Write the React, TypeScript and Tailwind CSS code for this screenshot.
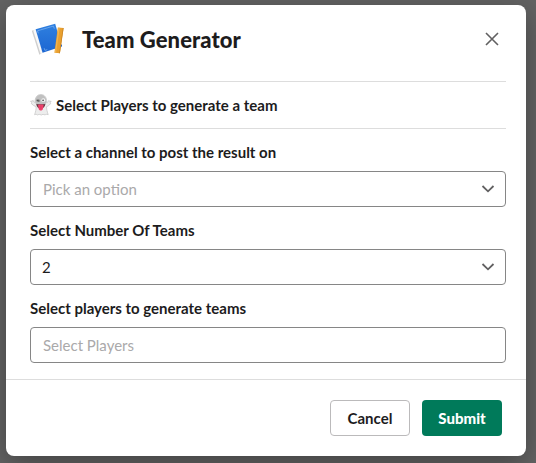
import React from "react";

function BooksIcon() {
  return (
    <svg width="36" height="36" viewBox="0 0 36 36" className="shrink-0" aria-hidden="true">
      <defs>
        <linearGradient id="cover" x1="0" y1="0" x2="0" y2="1">
          <stop offset="0" stopColor="#2f80e0" />
          <stop offset="1" stopColor="#1c66d2" />
        </linearGradient>
      </defs>
      <path d="M29.5 20l2.6 3.6-1.2 1.6-2.4.4z" fill="#1c5cb8" />
      <path d="M1.8 8.8l2.6-1 8.2 22.8-3.2 2.2z" fill="#cfcfcf" />
      <path d="M3.2 8.4l2.4-.9 7 23.4-2 .8z" fill="#f8f8f8" />
      <path d="M5.6 7.2L25.2 1.8 31.7 24.6 12.6 30.7z" fill="url(#cover)" />
      <path d="M8.3 11.3l-.8-2.5 2.7-.8M20.7 4.9l2.8-.8.8 2.6M14.2 26.2l.7 2.2 2.4-.8M10.2 8l10.5-3.1" fill="none" stroke="#7fb4f2" strokeWidth=".7" />
      <path d="M27.8 5.6l5.8.5-3.7 25.2-5.5-.5z" fill="#e9a02f" />
      <path d="M28.4 5.7l1.3.1L26 31l-1.2-.1z" fill="#f0b452" />
      <path d="M32.8 6l.8.1-3.7 25.2-.8-.1z" fill="#cb8524" />
    </svg>
  );
}

function GhostIcon() {
  return (
    <svg width="22" height="22" viewBox="0 0 22 22" className="shrink-0" aria-hidden="true">
      <path
        d="M5 8.5C4.9 3.4 7.2.5 10.8.5s6.2 2.9 5.9 8c1.2-.2 1.7-.9 2-2l1 .7 1.4.1-.8 1.2.2 1.3c-1.2 1.4-2.7 2.5-4 2.9.1 3.2.8 5.2 1.7 8-1.6-.6-2.4-.4-3.2.3-1.5-.9-2.6-.8-3.8.1-1.4-.9-2.3-.9-3.5-.1-.9-.7-1.7-.8-3.1-.3 1-2.9 1.6-5 1.5-8C4.4 12 2.6 11.1 1.4 9.7l.2-1.4L.6 7.2l1.6-.1.9-.8c.3 1.3.8 2 1.9 2.2z"
        fill="#ededed"
        stroke="#c2c2c2"
        strokeWidth=".7"
      />
      <path d="M5.3 9C4.8 3.8 7.2.8 10.8.8S16.8 3.8 16.3 9l-1.2 2H6.7z" fill="#c0c0c0" />
      <ellipse cx="8.1" cy="6.6" rx="1.7" ry="1.4" fill="#8a8a8a" />
      <circle cx="13.3" cy="6.2" r="1.9" fill="#f5f5f5" />
      <circle cx="13.1" cy="6.3" r=".9" fill="#555" />
      <path d="M6.8 6.2l2.6 1" stroke="#444" strokeWidth=".8" />
      <path d="M6.3 9.9c2.7.5 6.2.5 9 0-.2 2.6-1.7 4.7-4.5 4.7s-4.3-2.1-4.5-4.7z" fill="#6b3441" />
      <path d="M8 11c1.2-.6 4.4-.6 5.6 0l-.6 3.5c-.2 1.6-1.1 2-2.2 2s-2-.5-2.2-2z" fill="#ef426c" />
      <path d="M10.8 11.6v3" stroke="#d33860" strokeWidth=".5" />
    </svg>
  );
}

function Chevron() {
  return (
    <svg width="14" height="10" viewBox="0 0 14 10" className="shrink-0" aria-hidden="true">
      <path d="M1.5 2L7 7.3 12.5 2" fill="none" stroke="#616061" strokeWidth="1.8" />
    </svg>
  );
}

type FieldProps = {
  label: string;
  text: string;
  filled?: boolean;
  dropdown?: boolean;
};

function Field({ label, text, filled = false, dropdown = false }: FieldProps) {
  return (
    <div>
      <div className="h-[30px] text-[15px] leading-[22px] font-bold">{label}</div>
      <div className="flex h-9 items-center justify-between rounded border border-[#868686] pr-[10px] pl-3 text-[15px]">
        <span className={filled ? "-ml-px text-[#1d1c1d]" : "text-[#aaa9aa]"}>{text}</span>
        {dropdown && <Chevron />}
      </div>
    </div>
  );
}

export default function App() {
  return (
    <div className="h-[463px] w-[536px] overflow-hidden bg-[#636363] pt-[5px] pl-[6px] font-['Lato',sans-serif] text-[#1d1c1d]">
      <div className="flex h-[451px] w-[520px] flex-col rounded-lg bg-white shadow-[0_8px_28px_rgba(0,0,0,0.32)]">
        <header className="flex h-[76px] items-center pr-[26px] pb-[6px] pl-6">
          <BooksIcon />
          <h1 className="ml-4 flex-1 text-[22px] leading-[30px] font-black tracking-[0.07px]">Team Generator</h1>
          <button aria-label="Close" className="pb-[2px]">
            <svg width="16" height="16" viewBox="0 0 16 16" aria-hidden="true">
              <path d="M2 2l12 12M14 2L2 14" fill="none" stroke="#616061" strokeWidth="1.6" />
            </svg>
          </button>
        </header>
        <main className="flex-1 pr-5 pl-6">
          <div className="flex h-12 items-center gap-1 border-y border-[#dddddd] text-[15px] font-bold">
            <GhostIcon />
            <span>Select Players to generate a team</span>
          </div>
          <div className="flex flex-col gap-3 pt-3">
            <Field label="Select a channel to post the result on" text="Pick an option" dropdown />
            <Field label="Select Number Of Teams" text="2" filled dropdown />
            <Field label="Select players to generate teams" text="Select Players" />
          </div>
        </main>
        <footer className="flex h-[77px] justify-end gap-3 border-t border-[#dddddd] pt-5 pr-6 text-[15px] font-black">
          <button className="h-9 w-20 rounded border border-[#bbbabb] bg-white font-bold">Cancel</button>
          <button className="h-9 w-20 rounded bg-[#007a5a] text-white">Submit</button>
        </footer>
      </div>
    </div>
  );
}
